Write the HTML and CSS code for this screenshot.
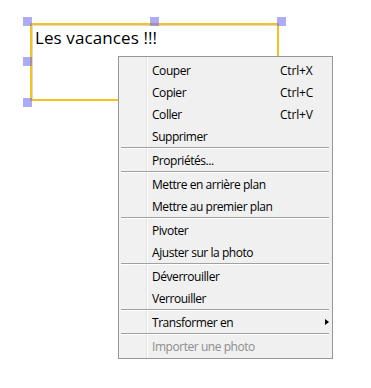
FILE: index.html
```html
<!DOCTYPE html>
<html lang="fr">
<head>
    <meta charset="UTF-8">
    <title>Les vacances</title>
    <link rel="stylesheet" href="styles.css">
</head>
<body>

<div class="stage">
    <div class="text-box">
        <div class="text-content">Les vacances !!!</div>
    </div>

    <!-- poignées de sélection -->
    <span class="handle h-tl"></span>
    <span class="handle h-tm"></span>
    <span class="handle h-tr"></span>
    <span class="handle h-ml"></span>
    <span class="handle h-bl"></span>

    <div class="context-menu">
        <div class="item"><span class="label">Couper</span><span class="shortcut">Ctrl+X</span></div>
        <div class="item"><span class="label">Copier</span><span class="shortcut">Ctrl+C</span></div>
        <div class="item"><span class="label">Coller</span><span class="shortcut">Ctrl+V</span></div>
        <div class="item"><span class="label">Supprimer</span></div>
        <div class="separator"></div>
        <div class="item"><span class="label">Propriétés...</span></div>
        <div class="separator"></div>
        <div class="item"><span class="label">Mettre en arrière plan</span></div>
        <div class="item"><span class="label">Mettre au premier plan</span></div>
        <div class="separator"></div>
        <div class="item"><span class="label">Pivoter</span></div>
        <div class="item"><span class="label">Ajuster sur la photo</span></div>
        <div class="separator"></div>
        <div class="item"><span class="label">Déverrouiller</span></div>
        <div class="item"><span class="label">Verrouiller</span></div>
        <div class="separator"></div>
        <div class="item submenu"><span class="label">Transformer en</span><span class="arrow"></span></div>
        <div class="separator"></div>
        <div class="item disabled"><span class="label">Importer une photo</span></div>
    </div>
</div>

</body>
</html>
```

FILE: styles.css
```css
body {
    margin: 0;
    padding: 0;
    background-color: #fff;
    font-family: "Open Sans", "Noto Sans", sans-serif;
    color: #000;
}

.stage {
    position: relative;
    width: 371px;
    height: 388px;
    padding-top: 23px;
    padding-left: 30px;
    box-sizing: border-box;
}

.text-box {
    width: 249px;
    height: 78px;
    box-sizing: border-box;
    border: 2px solid #f5c31c;
    box-shadow: inset 1px 1px 0 #d9d9d9;
    padding: 2px 0 0 3px;
}

.text-content {
    font-size: 17px;
    line-height: 22px;
    letter-spacing: 0.1px;
}

.handle {
    position: absolute;
    width: 9px;
    height: 9px;
    background-color: rgba(110, 110, 240, 0.58);
}
.h-tl { left: 23px; top: 17px; }
.h-tm { left: 150px; top: 17px; }
.h-tr { left: 277px; top: 17px; }
.h-ml { left: 23px; top: 57px; }
.h-bl { left: 23px; top: 98px; }

.context-menu {
    position: absolute;
    left: 118px;
    top: 56px;
    width: 215px;
    box-sizing: border-box;
    border: 1px solid #979797;
    padding: 2px 0 1px 0;
    background: linear-gradient(to right, #f1f1f1 0 27px, #e3e3e3 27px 28px, #fff 28px 29px, #f0f0f0 29px);
    font-size: 12px;
    letter-spacing: -0.45px;
}

.item {
    display: grid;
    grid-template-columns: 128px auto;
    align-items: center;
    height: 22px;
    padding-left: 33px;
    color: #000;
    white-space: nowrap;
}

.shortcut {
    letter-spacing: -0.2px;
}

.item.disabled {
    color: #8d8d8d;
}

.submenu {
    position: relative;
}

.arrow {
    position: absolute;
    left: 206px;
    top: 8px;
    width: 0;
    height: 0;
    border-top: 3.5px solid transparent;
    border-bottom: 3.5px solid transparent;
    border-left: 4px solid #000;
}

.separator {
    height: 1px;
    margin: 0 3px 0 2px;
    background-color: #a0a0a0;
    border-bottom: 1px solid #fff;
}
```
